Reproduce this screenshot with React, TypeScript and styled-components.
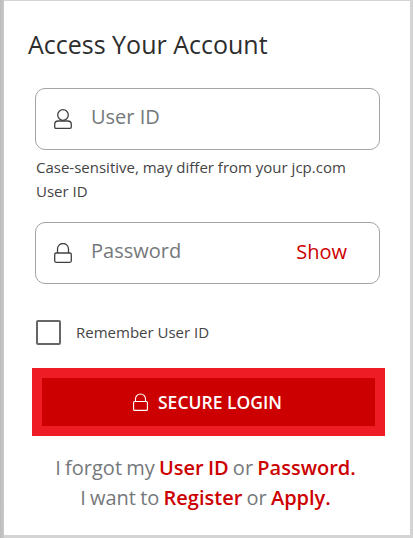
import React from "react";
import styled, { createGlobalStyle } from "styled-components";

const GlobalStyle = createGlobalStyle`
  html, body {
    margin: 0;
    height: 100%;
    background: #d4d4d4;
    font-family: "Open Sans", "Liberation Sans", sans-serif;
    overflow: hidden;
  }
`;

const Page = styled.div`
  width: 413px;
  height: 538px;
  box-sizing: border-box;
  padding: 1px 3px 3px 4px;
  background: linear-gradient(90deg, #bdbdbd 0, #c8c8c8 4px, #d4d4d4 4px);
`;

const Card = styled.main`
  height: 534px;
  box-sizing: border-box;
  background: #fff;
  padding: 27px 25px 0 24px;
`;

const Title = styled.h1`
  margin: 0 0 28px;
  font-size: 25px;
  line-height: 32px;
  font-weight: 400;
  color: #2d2d2d;
`;

const Form = styled.form`
  display: flex;
  flex-direction: column;
  margin: 0;
`;

const Field = styled.div`
  display: flex;
  align-items: center;
  box-sizing: border-box;
  width: 345px;
  height: 62px;
  margin-left: 7px;
  padding: 0 32px 0 18px;
  border: 1px solid #a3a3a3;
  border-radius: 10px;
`;

const FieldIcon = styled.svg`
  width: 18px;
  height: 20px;
  flex: none;
  margin-right: 19px;
  fill: none;
  stroke: #404040;
  stroke-width: 1.3;
`;

const Placeholder = styled.span`
  flex: 1;
  font-size: 20px;
  line-height: 28px;
  color: #75787b;
  position: relative;
  top: -2px;
`;

const Show = styled.span`
  font-size: 20px;
  line-height: 28px;
  color: #cc0000;
  position: relative;
  top: -1px;
`;

const Help = styled.p`
  margin: 5px 0 19px 8px;
  width: 330px;
  font-size: 15px;
  line-height: 24px;
  color: #444;
`;

const Remember = styled.label`
  display: flex;
  align-items: center;
  gap: 15px;
  margin: 36px 0 23px 8px;
  font-size: 15px;
  line-height: 24px;
  color: #444;
`;

const RememberText = styled.span`
  position: relative;
  top: -1px;
`;

const Box = styled.span`
  display: block;
  box-sizing: border-box;
  width: 25px;
  height: 25px;
  border: 2px solid #666;
  border-radius: 2px;
`;

const LoginButton = styled.button`
  display: flex;
  align-items: center;
  justify-content: center;
  gap: 10px;
  box-sizing: border-box;
  width: 353px;
  height: 68px;
  margin-left: 4px;
  padding: 0 2px 0 0;
  border: 10px solid #ee1c25;
  background: #cc0000;
  color: #fff;
  font-family: inherit;
  font-size: 17.5px;
  font-weight: 600;
`;

const ButtonIcon = styled.svg`
  width: 15px;
  height: 18px;
  fill: none;
  stroke: #fff;
  stroke-width: 1.1;
`;

const Links = styled.div`
  margin: 17px 0 0 4px;
  width: 347px;
  text-align: center;
  font-size: 20px;
  line-height: 30px;
  color: #75787b;
  word-spacing: -1px;
`;

const RedLink = styled.a`
  color: #cc0000;
  font-weight: 600;
  text-decoration: none;
`;

const UserGlyph = () => (
  <FieldIcon viewBox="0 0 18 20">
    <circle cx="9" cy="6" r="5.300" />
    <path d="M.7 18v-2.500c0-2 1.500-3.500 3.500-3.500h9.600c2 0 3.500 1.500 3.500 3.500V18c0 .8-.5 1.300-1.300 1.300H2c-.8 0-1.300-.5-1.300-1.300z" />
  </FieldIcon>
);

const LockGlyph = () => (
  <FieldIcon viewBox="0 0 18 20">
    <path d="M3.500 10V6a5.500 5.500 0 0 1 11 0v4" />
    <rect x=".7" y="10" width="16.600" height="9.300" rx="1.500" />
  </FieldIcon>
);

export default function App() {
  return (
    <>
      <GlobalStyle />
      <Page>
        <Card>
          <Title>Access Your Account</Title>
          <Form>
            <Field>
              <UserGlyph />
              <Placeholder>User ID</Placeholder>
            </Field>
            <Help>Case-sensitive, may differ from your jcp.com User ID</Help>
            <Field>
              <LockGlyph />
              <Placeholder>Password</Placeholder>
              <Show>Show</Show>
            </Field>
            <Remember>
              <Box />
              <RememberText>Remember User ID</RememberText>
            </Remember>
            <LoginButton type="button">
              <ButtonIcon viewBox="0 0 15 18">
                <path d="M2.500 8.500V6a5 5 0 0 1 10 0v2.500" />
                <rect x=".6" y="8.500" width="13.800" height="8.900" rx="1" />
              </ButtonIcon>
              SECURE LOGIN
            </LoginButton>
            <Links>
              I forgot my <RedLink href="#">User ID</RedLink> or <RedLink href="#">Password.</RedLink>
              <br />
              I want to <RedLink href="#">Register</RedLink> or <RedLink href="#">Apply.</RedLink>
            </Links>
          </Form>
        </Card>
      </Page>
    </>
  );
}
